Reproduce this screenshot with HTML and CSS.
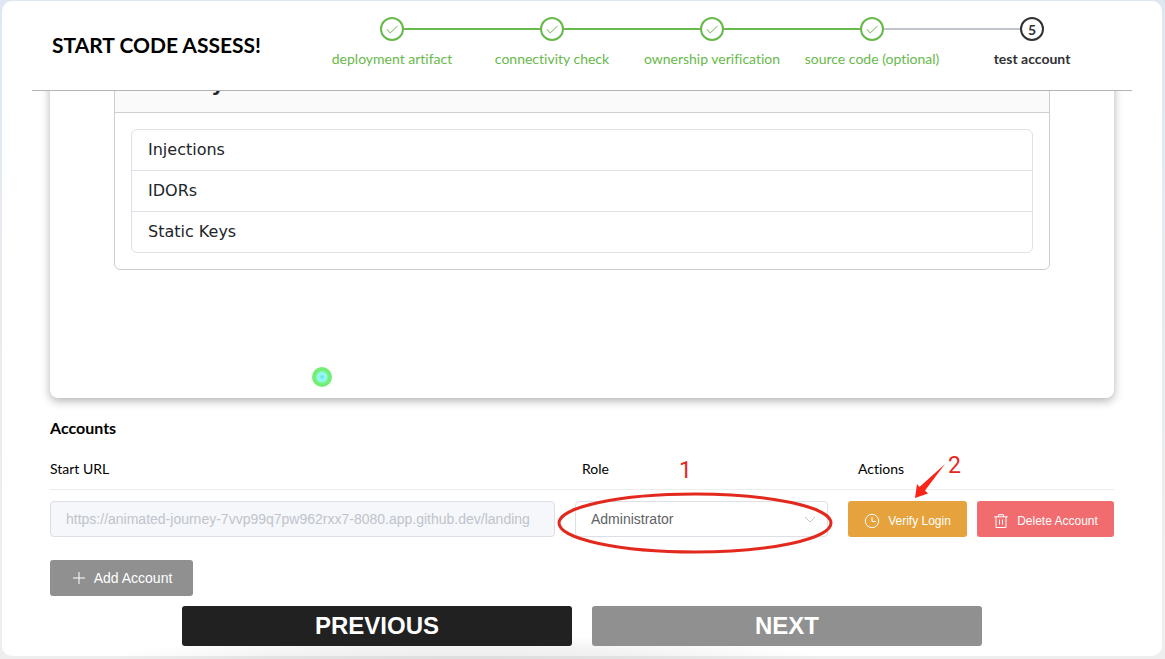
FILE: index.html
```html
<!DOCTYPE html>
<html lang="en">
<head>
<meta charset="utf-8">
<title>Start Code Assess</title>
<link rel="stylesheet" href="styles.css">
</head>
<body>
<div class="shell">
  <header class="top">
    <h1 class="title">START CODE ASSESS!</h1>
    <ol class="steps">
      <li class="step done"><span class="dot"><svg class="check" viewBox="0 0 14 14"><path d="M2 7.2 5.2 11 12.6 4"/></svg></span><span class="label">deployment artifact</span></li>
      <li class="step done"><span class="dot"><svg class="check" viewBox="0 0 14 14"><path d="M2 7.2 5.2 11 12.6 4"/></svg></span><span class="label">connectivity check</span></li>
      <li class="step done"><span class="dot"><svg class="check" viewBox="0 0 14 14"><path d="M2 7.2 5.2 11 12.6 4"/></svg></span><span class="label">ownership verification</span></li>
      <li class="step done"><span class="dot"><svg class="check" viewBox="0 0 14 14"><path d="M2 7.2 5.2 11 12.6 4"/></svg></span><span class="label">source code (optional)</span></li>
      <li class="step current"><span class="dot">5</span><span class="label">test account</span></li>
    </ol>
  </header>
  <main class="content">
    <section class="preview">
      <div class="panel">
        <h2 class="panel-title">Security</h2>
        <ul class="list">
          <li>Injections</li>
          <li>IDORs</li>
          <li>Static Keys</li>
        </ul>
      </div>
      <span class="pointer"></span>
    </section>
    <h3 class="section-title">Accounts</h3>
    <table class="accounts">
      <colgroup><col><col class="col-role"><col class="col-actions"></colgroup>
      <thead>
        <tr>
          <th scope="col">Start URL</th>
          <th scope="col" class="th-role">Role</th>
          <th scope="col" class="th-actions">Actions
            <svg class="mark-arrow" viewBox="0 0 50 50"><path d="M35 12 9.5 35 7 32 5 46 18 41.5 15 38.5Z"/><text x="38" y="21">2</text></svg>
          </th>
        </tr>
      </thead>
      <tbody>
        <tr>
          <td class="td-url"><input class="field" type="text" aria-label="Start URL" disabled value="https://animated-journey-7vvp99q7pw962rxx7-8080.app.github.dev/landing"></td>
          <td class="td-role">
            <div class="select-wrap">
              <select class="field select" aria-label="Role"><option>Administrator</option></select>
              <svg class="chevron" viewBox="0 0 12 12"><path d="M1 4 6 9 11 4"/></svg>
            </div>
            <svg class="mark-oval" viewBox="0 0 280 100"><text x="123" y="24">1</text><ellipse cx="139" cy="69" rx="136" ry="29"/></svg>
          </td>
          <td class="td-actions">
            <div class="actions">
              <button class="btn verify" type="button"><svg class="icon" viewBox="0 0 16 16"><circle cx="8" cy="8" r="6.7"/><path d="M8 4V8.5H12"/></svg>Verify Login</button>
              <button class="btn delete" type="button"><svg class="icon" viewBox="0 0 16 16"><path d="M1.2 3.8H14.8M5.5 3.8V1.7H10.5V3.8M3 3.8V14.5H13V3.8M6.5 6.5V11.5M9.5 6.5V11.5"/></svg>Delete Account</button>
            </div>
          </td>
        </tr>
      </tbody>
    </table>
    <button class="btn add" type="button"><svg class="icon" viewBox="0 0 16 16"><path d="M8 2V14M2 8H14"/></svg>Add Account</button>
    <nav class="pager">
      <button class="page-btn prev" type="button">PREVIOUS</button>
      <button class="page-btn next" type="button">NEXT</button>
    </nav>
  </main>
</div>
</body>
</html>
```
FILE: styles.css
```css
* { box-sizing: border-box; }

body {
  margin: 0;
  min-height: 100vh;
  padding: 1px 3px 3px 2px;
  background: linear-gradient(#dfe8f1, #eeeeee 90%);
  font-family: Lato, "Liberation Sans", sans-serif;
  font-size: 14px;
  font-variant-ligatures: none;
  color: #000;
}

.shell {
  position: relative;
  padding: 0 30px 10px;
  border-radius: 10px;
  background: #fff;
}

.shell::before {
  content: "";
  position: absolute;
  left: 9%;
  right: 29%;
  bottom: -3px;
  height: 24px;
  background: radial-gradient(ellipse 50% 100% at 50% 100%, rgba(0, 0, 0, 0.07), rgba(0, 0, 0, 0.05) 50%, rgba(0, 0, 0, 0));
}

.top {
  display: flex;
  align-items: center;
  justify-content: space-between;
  height: 90px;
  padding: 0 20px 2px;
  border-bottom: 1px solid #b4b4b4;
}

.title {
  margin: 0;
  font-size: 21px;
  line-height: 28px;
  font-weight: 700;
}

.steps {
  display: flex;
  width: 800px;
  margin: 0;
  padding: 0;
  list-style: none;
}

.step {
  position: relative;
  display: flex;
  flex: 1;
  flex-direction: column;
  align-items: center;
  gap: 8px;
  padding-bottom: 3px;
  color: #67b94b;
}

.step + .step::before {
  content: "";
  position: absolute;
  top: 11px;
  right: calc(50% + 12px);
  left: calc(-50% + 12px);
  height: 2px;
  background: #67b94b;
}

.step.current::before { background: #c0c4cc; }

.dot {
  display: flex;
  align-items: center;
  justify-content: center;
  width: 24px;
  height: 24px;
  border: 2px solid #67b94b;
  border-radius: 50%;
  background: #fff;
}

.check {
  width: 14px;
  height: 14px;
  fill: none;
  stroke: #67b94b;
}

.label { line-height: 20px; white-space: nowrap; }

.step.current { color: #303133; font-weight: 700; }
.step.current .dot { border-color: #303133; }

.content {
  position: relative;
  overflow: hidden;
  padding: 0 18px;
}

.preview {
  position: relative;
  margin-top: -54px;
  padding: 16px 64px 128px;
  border-radius: 8px;
  background: #fff;
  box-shadow: 0 3px 10px rgba(0, 0, 0, 0.3);
}

.panel {
  border: 1px solid #cfcfcf;
  border-radius: 6px;
  font-family: "DejaVu Sans", sans-serif;
  color: #212529;
}

.panel-title {
  margin: 0;
  padding: 17px 16px 15px;
  border-bottom: 1px solid #cfcfcf;
  background: #fafafa;
  font-size: 20px;
  line-height: 26px;
}

.list {
  margin: 16px;
  padding: 0;
  border: 1px solid #dee2e6;
  border-radius: 6px;
  list-style: none;
  font-size: 16px;
}

.list li { padding: 8px 16px; line-height: 24px; }
.list li + li { border-top: 1px solid #dee2e6; }

.pointer {
  position: absolute;
  left: 262px;
  bottom: 11px;
  width: 20px;
  height: 20px;
  border-radius: 50%;
  background: radial-gradient(circle, #62dfe0 0, #96f7f5 3px, #96f7f5 4px, #70ef73 7px);
}

.section-title {
  margin: 18px 0 9px;
  font-size: 16px;
  line-height: 24px;
}

.accounts {
  width: 100%;
  border-collapse: collapse;
  table-layout: fixed;
}

.col-role { width: 273px; }
.col-actions { width: 276px; }

.accounts th {
  position: relative;
  padding: 10px 0;
  border-bottom: 1px solid #ebeef0;
  font-weight: 400;
  line-height: 20px;
  text-align: left;
}

.accounts .th-role { padding-left: 17px; }
.accounts .th-actions { padding-left: 20px; }

.accounts td { padding: 11px 0 0; }
.accounts .td-url { padding-right: 10px; }
.accounts .td-role { position: relative; padding-left: 10px; padding-right: 10px; }
.accounts .td-actions { padding-left: 10px; }

.field {
  display: block;
  width: 100%;
  height: 36px;
  padding: 0 15px;
  border: 1px solid #dcdfe6;
  border-radius: 4px;
  background: #fff;
  color: #606266;
  font: 14px "Liberation Sans", Arial, sans-serif;
}

.field:disabled { background: #f5f7fa; color: #c0c4cc; }

.select-wrap { display: grid; align-items: center; }
.select-wrap > * { grid-area: 1 / 1; }
.select { appearance: none; }

.chevron {
  justify-self: end;
  width: 12px;
  height: 12px;
  margin-right: 12px;
  fill: none;
  stroke: #c0c4cc;
  pointer-events: none;
}

.mark-oval,
.mark-arrow {
  position: absolute;
  overflow: visible;
  pointer-events: none;
  fill: #e3291d;
  font: 23px Roboto, sans-serif;
}

.mark-oval { left: -9px; top: -36px; width: 280px; height: 100px; }
.mark-oval ellipse { fill: none; stroke: #e3291d; stroke-width: 3; }
.mark-arrow { left: 72px; top: 3px; width: 50px; height: 50px; }
.mark-arrow path { fill: #fb2418; }

.actions { display: flex; gap: 10px; }

.btn {
  display: flex;
  align-items: center;
  justify-content: center;
  gap: 8px;
  height: 36px;
  padding: 3px 0 0;
  border: 0;
  border-radius: 3px;
  color: #fff;
  font: 12px "Liberation Sans", Arial, sans-serif;
}

.icon { width: 16px; height: 16px; fill: none; stroke: #fff; stroke-width: 1; }

.verify { flex: 119; background: #e6a23c; }
.delete { flex: 137; background: #f06c6e; }

.add {
  gap: 7px;
  width: 143px;
  margin-top: 23px;
  padding: 0;
  background: #909090;
  font-size: 14px;
}

.pager {
  display: flex;
  gap: 20px;
  max-width: 800px;
  margin: 10px auto 0;
}

.page-btn {
  flex: 1;
  height: 40px;
  padding: 0;
  border: 0;
  border-radius: 3px;
  color: #fff;
  font: bold 24px "Liberation Sans", Arial, sans-serif;
}

.prev { background: #212121; }
.next { background: #909090; }
```
